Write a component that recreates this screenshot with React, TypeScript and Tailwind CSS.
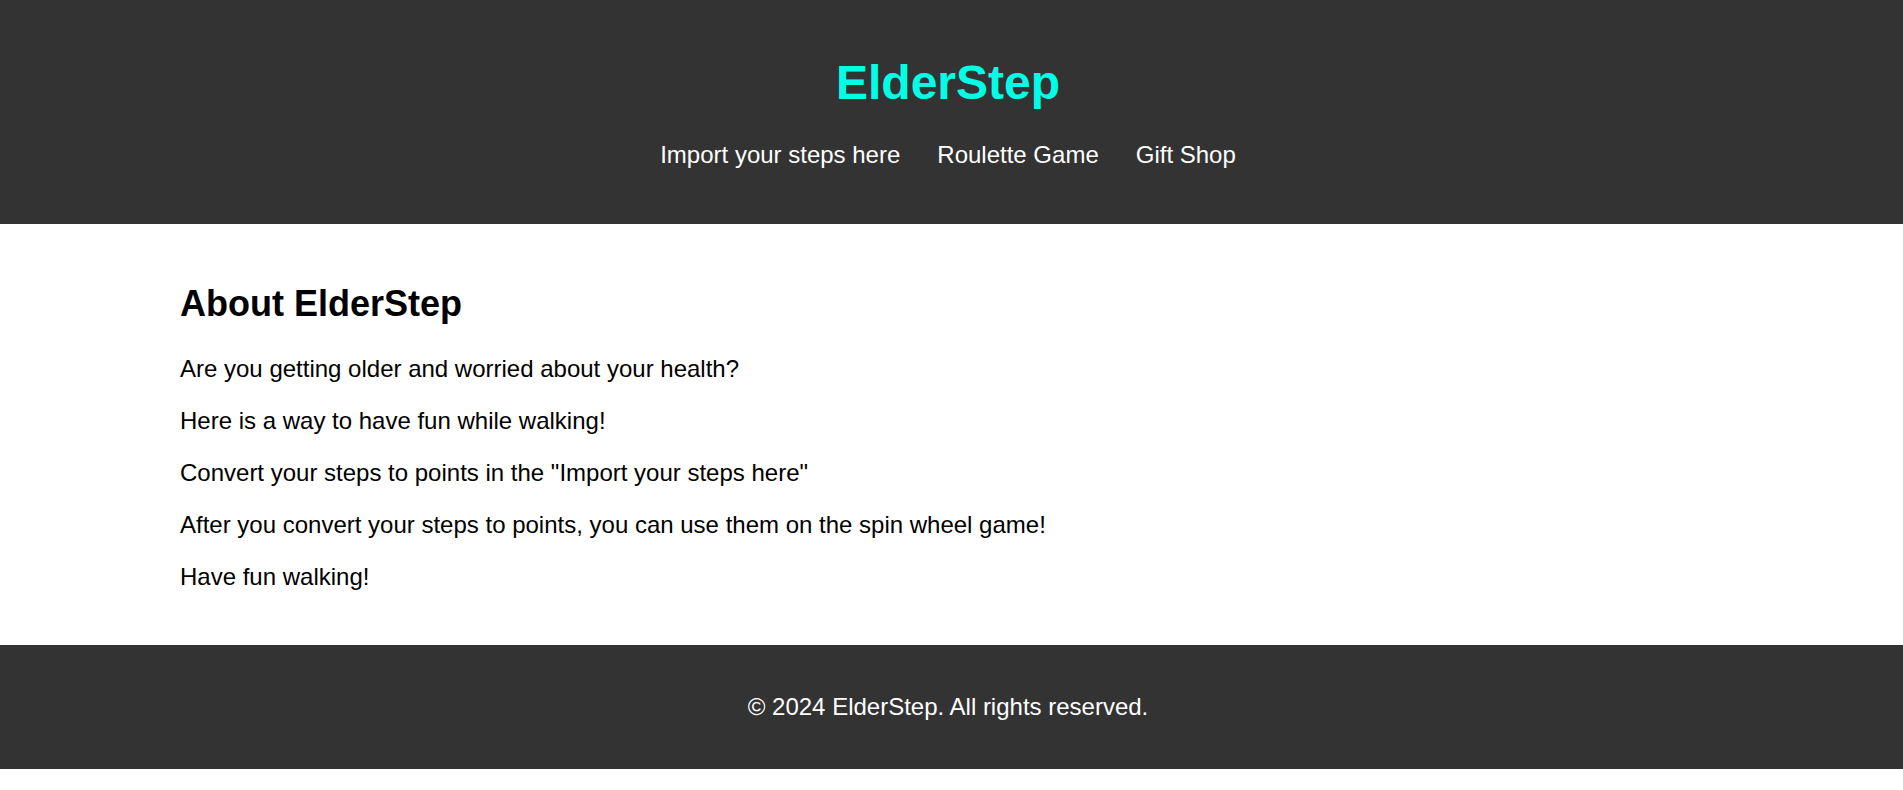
import React from 'react';

const navLinks = ['Import your steps here', 'Roulette Game', 'Gift Shop'];

const paragraphs = [
  'Are you getting older and worried about your health?',
  'Here is a way to have fun while walking!',
  'Convert your steps to points in the "Import your steps here"',
  'After you convert your steps to points, you can use them on the spin wheel game!',
  'Have fun walking!',
];

export default function App() {
  return (
    <div className="min-h-screen bg-white font-['Liberation_Sans',Arial,sans-serif]">
      {/* Header */}
      <header className="bg-[#333333] pt-[55px] pb-[55px] pr-[7px] text-center">
        <h1 className="text-[48px] font-bold leading-[55px] text-[#00ffe5]">ElderStep</h1>
        <nav className="mt-[31px] flex justify-center gap-[37px] text-[24px] leading-[27.6px] text-white">
          {navLinks.map((link) => (
            <a key={link} href="#" className="text-white">
              {link}
            </a>
          ))}
        </nav>
      </header>

      {/* About */}
      <main className="px-[180px] pt-[59px] pb-[30px]">
        <h2 className="text-[36px] font-bold leading-[41.4px] text-black">About ElderStep</h2>
        <div className="mt-[31px] flex flex-col gap-[24px]">
          {paragraphs.map((text) => (
            <p key={text} className="text-[24px] leading-[28px] text-black">
              {text}
            </p>
          ))}
        </div>
        <div className="h-[24px]" />
      </main>

      {/* Footer */}
      <footer className="bg-[#333333] py-[48px] pr-[7px] text-center">
        <p className="text-[24px] leading-[27.6px] text-white">© 2024 ElderStep. All rights reserved.</p>
      </footer>
    </div>
  );
}
